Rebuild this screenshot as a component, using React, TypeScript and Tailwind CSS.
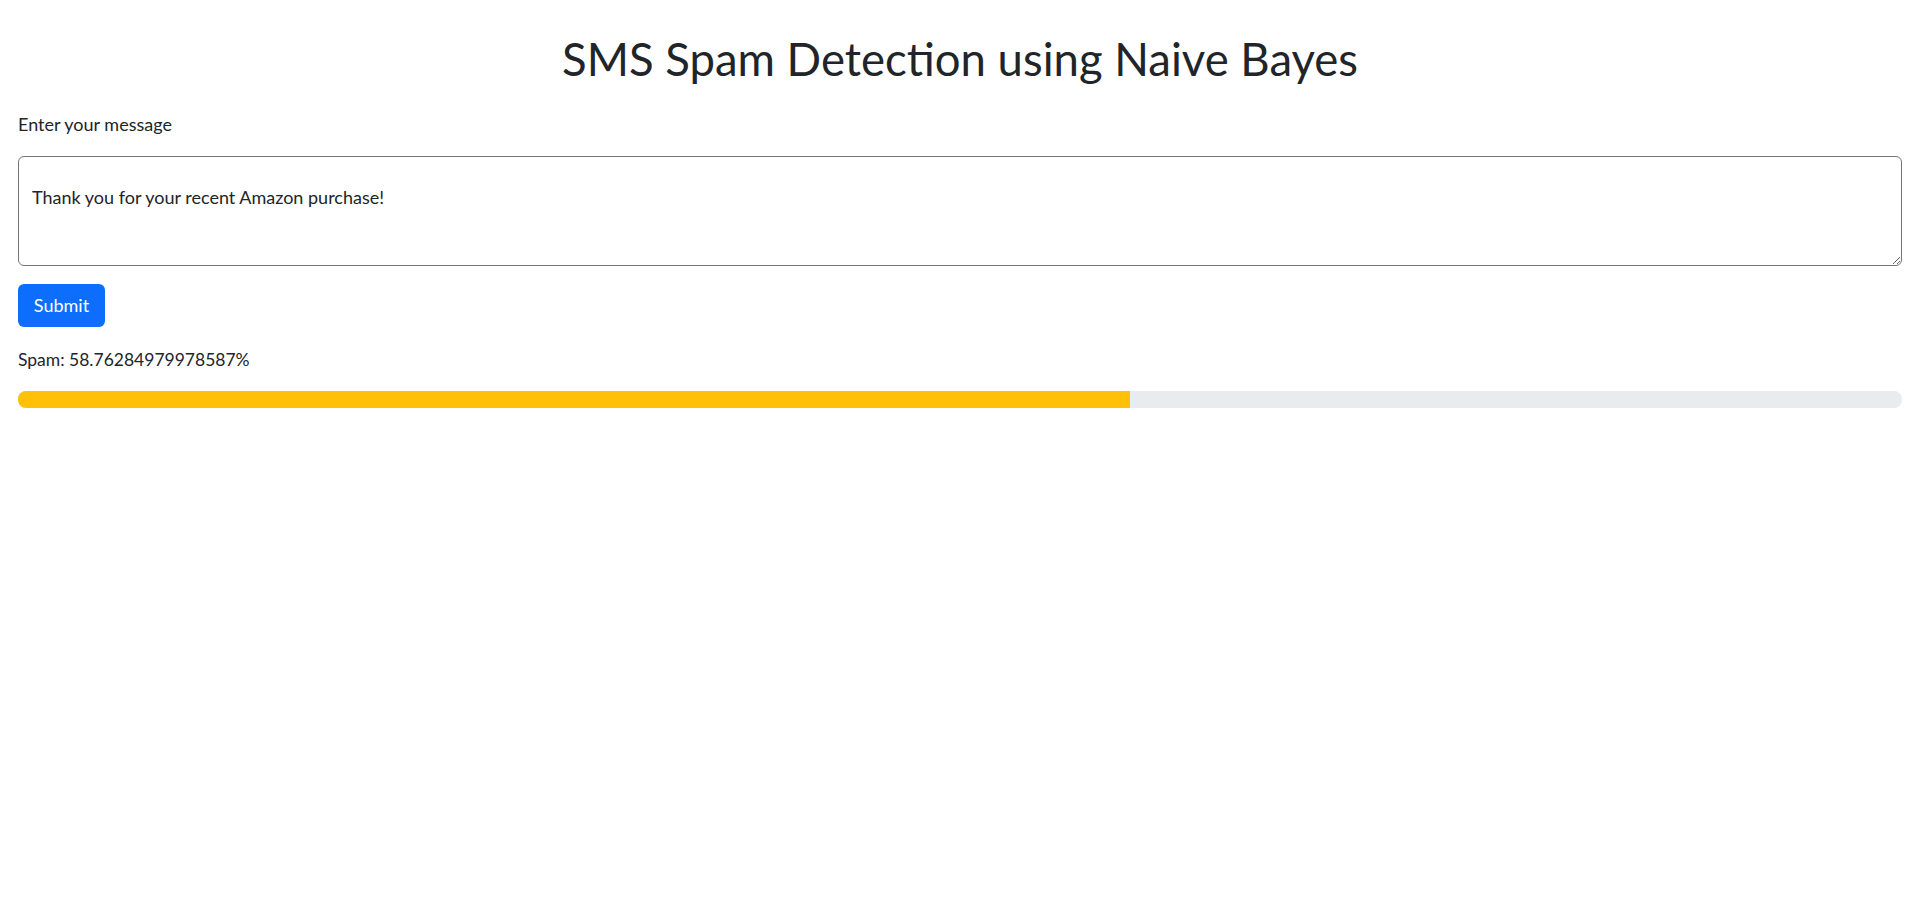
export default function App() {
  const spam = 58.76284979978587;

  return (
    <div className="min-h-screen bg-white font-['Lato',sans-serif] text-[#212529]">
      <div className="px-[18px] pt-[31px]">
        <h1 className="text-center text-[45.5px] leading-[55px] font-normal">
          SMS Spam Detection using Naive Bayes
        </h1>
        <label htmlFor="message" className="mt-[26px] block text-[18px] leading-6">
          Enter your message
        </label>
        <textarea
          id="message"
          rows={4}
          defaultValue={"\nThank you for your recent Amazon purchase!"}
          className="mt-5 block h-[110px] w-full rounded-md border border-[#767676] px-[13px] py-1 text-[18px] leading-6 text-[#212529] outline-none"
        />
        <button
          type="button"
          className="mt-[18px] flex h-[43px] w-[87px] items-center justify-center rounded-md bg-[#0d6efd] text-[18px] text-white"
        >
          Submit
        </button>
        <p className="mt-[21px] text-[17.5px] leading-6">Spam: {spam}%</p>
        <div className="mt-[19px] flex h-[17px] w-full overflow-hidden rounded-lg bg-[#e9ecef]">
          <div className="bg-[#ffc107]" style={{ width: "59%" }} />
        </div>
      </div>
    </div>
  );
}
